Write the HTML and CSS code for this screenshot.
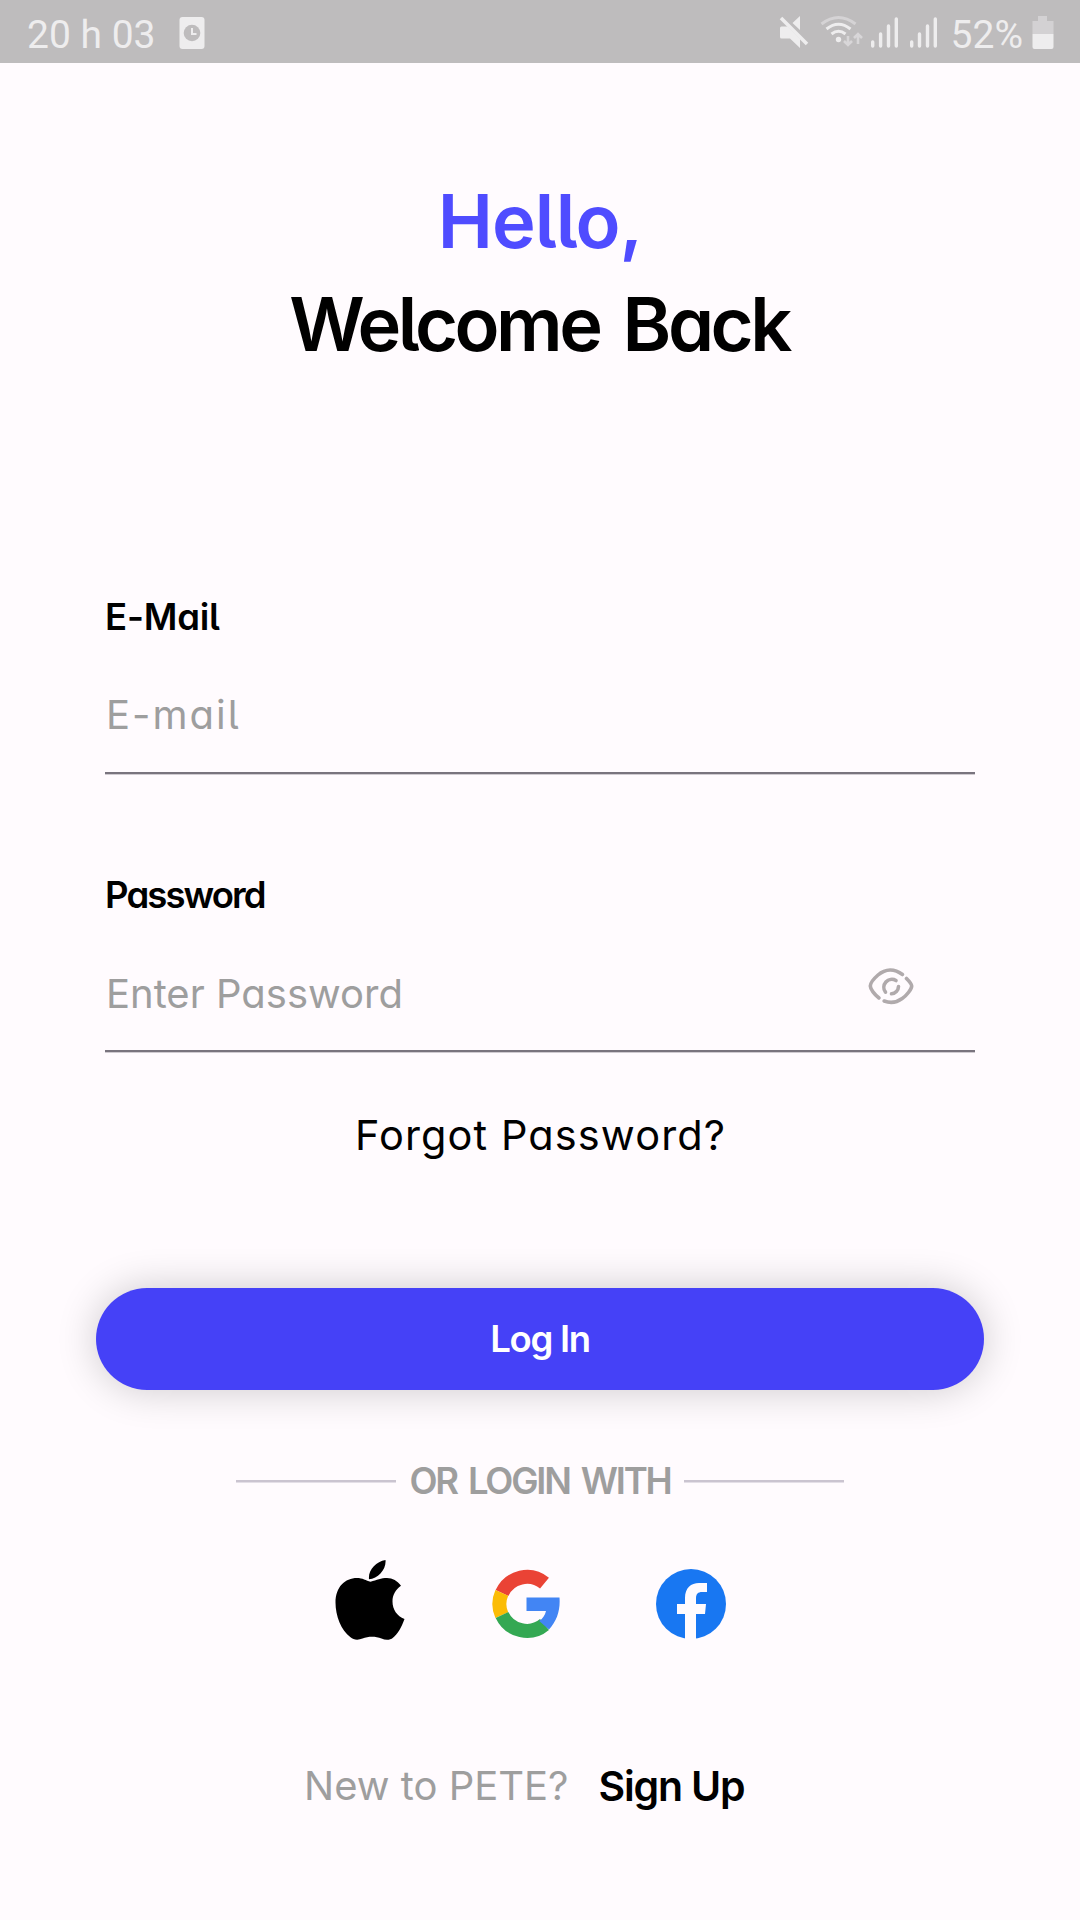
FILE: index.html
```html
<!DOCTYPE html>
<html lang="en">
<head>
<meta charset="utf-8">
<title>Log In</title>
<link rel="stylesheet" href="styles.css">
</head>
<body>
<div class="status">
  <div class="status-left">
    <span class="clock">20 h 03</span>
    <svg class="alarm" width="26" height="32" viewBox="0 0 26 32"><rect x=".5" width="25" height="32" rx="3" fill="#eeedee"/><circle cx="13" cy="16" r="8.3" fill="#bebcbd"/><path d="M13 11v6h4.500" fill="none" stroke="#eeedee" stroke-width="2"/></svg>
  </div>
  <svg class="status-icons" width="160" height="36" viewBox="778 14 160 36">
    <g fill="#eeedee"><path d="M780 28q0-1.500 1.500-1.500h6L800 39v9l-10-9.500h-8.500q-1.500 0-1.500-1.500zM792.500 23l7.500-7v14z"/><path d="M781 18l26 26" stroke="#eeedee" stroke-width="3.600"/></g>
    <g fill="none" stroke-width="3"><path d="M821.500 24q17-13 34 0" stroke="#d5d3d5"/><path d="M826.500 29q12-9.500 24 0M831.500 34q7-5.500 14 0" stroke="#eeedee"/><path d="M848 36v9M844 41l4 4 4-4M858 44v-9M854 38l4-4 4 4" stroke="#d8d6d8" stroke-width="2.600"/></g>
    <circle cx="838.500" cy="39.500" r="2.700" fill="#eeedee"/>
    <path d="M872.700 42v4M880.600 34v12M888.500 26v20M896.300 19v27M911.700 42v4M919.500 34v12M927.500 26v20M935.300 19v27" stroke="#eeedee" stroke-width="3.400" stroke-linecap="round"/>
  </svg>
  <span class="percent">52%</span>
  <svg class="battery" width="22" height="33" viewBox="0 0 22 33"><path d="M6 0h9v5h6.500v13H.5V5H6z" fill="#d3d1d3"/><path d="M.5 18h21v13q0 2-2 2h-17q-2 0-2-2z" fill="#eeedee"/></svg>
</div>
<main class="screen">
  <h1 class="title"><span class="hello">Hello,</span><span class="welcome">Welcome Back</span></h1>
  <form class="form">
    <div class="field">
      <label class="label label-mail">E-Mail</label>
      <div class="entry"><span class="ph-mail">E-mail</span></div>
    </div>
    <div class="field">
      <label class="label label-pw">Password</label>
      <div class="entry"><span class="ph-pw">Enter Password</span>
        <svg class="eye" width="46" height="38" viewBox="0 0 46 38" fill="none" stroke="#b0aaac" stroke-width="3.600" stroke-linecap="round"><path d="M34.500 7.500C26.500 1.500 17.500 1.500 10 8 6 11.500 2.300 16.500 2.300 19c0 3 4.200 8.500 8.700 12"/><path d="M38.500 11.500C41.500 14.500 43.700 17.500 43.700 19c0 3-5 9.500-9.500 12.500-5.500 4-12 4.800-18 2.500"/><path d="M28 13.500a8 8 0 0 0-10.500 11.700"/><path d="M30.500 19.500a7.500 7.500 0 0 1-7 7.300"/></svg>
      </div>
    </div>
    <a class="forgot">Forgot Password?</a>
    <button class="login" type="button">Log In</button>
  </form>
  <div class="divider"><span class="or">OR LOGIN WITH</span></div>
  <div class="social">
    <svg class="apple" width="70" height="80" viewBox="0 0 70 80"><path d="M50.500 0C41 1.500 33 10 34 19.300 43 18.500 51.500 9.500 50.500 0zM35.500 21.800C42 20 46 18 52 18c5.500 0 10.500 3 14 7.800C60.500 30 57.500 35 57.500 41.500c0 8 4.500 14.500 12 17.500-3 8.500-7 15-11.500 18.800-3 2.500-7.500 2.600-11.500.7-6-2.500-13-2.500-19 0-4 1.800-9 1.600-12-1.200C6 70 .5 56 .5 42.500.5 27 10 18 22 18c5.500 0 9 2.500 13.500 3.800z"/></svg>
    <svg class="google" width="68" height="70" viewBox="0 0 68 70" fill="none" stroke-width="14"><path d="M52.500 14.200A27.500 27.500 0 0 0 10 24" stroke="#ea4335"/><path d="M9.800 23.800a27.500 27.500 0 0 0 0 22.400" stroke="#fbbc05"/><path d="M10 46a27.500 27.500 0 0 0 42.500 9.500" stroke="#34a853"/><path d="M34.500 28.500H67.500C68.500 41 65 52 57 60.500L47.200 52C51 49.500 53 46 54 42H34.500z" fill="#4285f4"/></svg>
    <svg class="facebook" width="70" height="70" viewBox="0 0 70 70"><circle cx="35" cy="35" r="35" fill="#1877f2"/><path d="M29 70V45h-8V35h8v-6c0-10 6-15 14-15h8v9h-5c-4 0-6 2-6 6v6h10l-1 10h-9v25z" fill="#fffbfe"/></svg>
  </div>
  <div class="signup"><span class="new">New to PETE?</span><a class="sign">Sign Up</a></div>
</main>
</body>
</html>
```
FILE: styles.css
```css
* { box-sizing: border-box; }
body { margin: 0; width: 1080px; height: 1920px; background: #fffbfe; color: #000; font-family: Inter, "Noto Sans", sans-serif; font-feature-settings: "cv05", "cv11"; white-space: nowrap; overflow: hidden; }
svg { display: block; flex: none; }

.status { display: flex; height: 63px; background: #bebcbd; color: #eeedee; font: 39px/63px Roboto, sans-serif; padding: 0 26px 0 27px; justify-content: flex-end; }
.status-left { display: flex; margin-right: auto; }
.alarm { margin: 17px 0 0 23px; }
.status-icons { margin-top: 14px; }
.percent { margin: 4px 0 0 13px; }
.clock { margin-top: 4px; }
.battery { margin: 16px 0 0 9px; }

.screen { display: flex; flex-direction: column; padding-top: 107px; }
.title { display: flex; flex-direction: column; align-items: center; margin: 0; font-size: 74px; font-weight: 600; line-height: 103px; }
.hello { color: #4f4cff; letter-spacing: -1px; }
.welcome { letter-spacing: -3.5px; word-spacing: 8px; margin-right: 2px; }
.form { display: flex; flex-direction: column; padding: 215px 96px 0; }
.field { margin: 0 9px; }
.field + .field { margin-top: 95px; }
.label { display: block; height: 50px; font-size: 36.5px; font-weight: 600; line-height: 52px; }
.label-mail { letter-spacing: -.2px; }
.label-pw { letter-spacing: -1.9px; }
.entry { display: flex; align-items: center; justify-content: space-between; height: 117px; margin-top: 16px; border-bottom: 2px solid #79747e; box-shadow: 0 1px rgba(121, 116, 126, .35); font-size: 40px; color: #9e9e9e; }
.ph-mail { padding-left: 1px; letter-spacing: 2px; }
.ph-pw { padding: 2px 0 0 1px; }
.eye { margin: 0 61px 14px 0; }
.forgot { margin-top: 58px; align-self: center; font-size: 41.5px; line-height: 50px; letter-spacing: 1.1px; padding-left: 1px; }
.login { height: 102px; margin-top: 128px; border: 0; border-radius: 51px; background: #4541f7; box-shadow: 0 0 40px rgba(0, 0, 0, .2); color: #fff; font: 600 36.5px/102px Inter, sans-serif; font-feature-settings: inherit; letter-spacing: -1.3px; padding: 0; }
.divider { display: flex; align-items: center; align-self: center; justify-content: space-between; width: 608px; height: 50px; margin-top: 66px; color: #9e9e9e; font-size: 36.5px; font-weight: 600; letter-spacing: -2.2px; word-spacing: 4px; }
.divider::before, .divider::after { content: ""; width: 160px; height: 2px; background: #cac4d0; box-shadow: 0 1px rgba(202, 196, 208, .5); }
.social { display: flex; margin-top: 54px; padding-left: 335px; height: 80px; }
.google { margin: 9px 0 0 87px; }
.facebook { margin: 9px 0 0 96px; }
.signup { display: flex; margin-top: 120px; padding-left: 304px; line-height: 52px; font-size: 40px; }
.new { color: #9e9e9e; }
.sign { margin-left: 30px; font-weight: 600; font-size: 41px; letter-spacing: -1.2px; }
```
